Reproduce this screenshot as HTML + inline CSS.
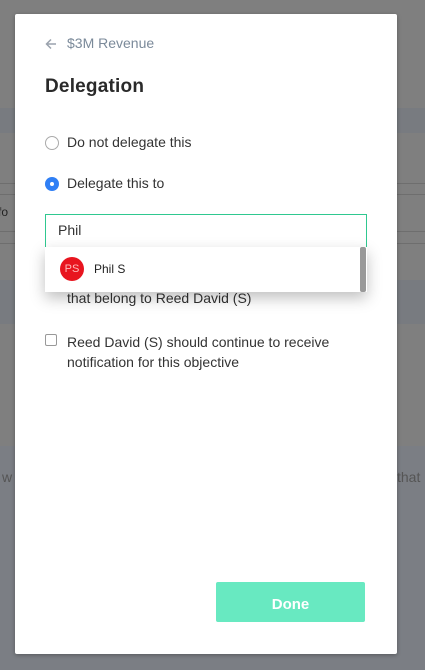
<!DOCTYPE html>
<html><head><style>
*{margin:0;padding:0;box-sizing:border-box}
body{width:425px;height:670px;overflow:hidden;background:#7f7f7f;font-family:"Liberation Sans",sans-serif;position:relative}
.bg{position:absolute;left:0;right:0}
.m{position:absolute;left:15px;top:14px;width:382px;height:640px;background:#fff;border-radius:2px;box-shadow:0 1px 4px rgba(0,0,0,.3)}
.t{position:absolute;font-size:14px;color:#333;white-space:nowrap}
</style></head><body>
<div class="bg" style="top:108px;height:25px;background:#787b80"></div>
<div class="bg" style="top:183px;height:1px;background:#6e6e6e"></div>
<div class="bg" style="top:194px;height:1px;background:#6e6e6e"></div>
<div class="bg" style="top:231px;height:1px;background:#6e6e6e"></div>
<div class="bg" style="top:243px;height:1px;background:#6e6e6e"></div>
<div class="bg" style="top:280px;height:44px;background:#787b80"></div>
<div class="bg" style="top:446px;bottom:0;background:#7b7e84"></div>
<div class="t" style="left:-2px;top:205px;font-size:12px;color:#222">fo</div>
<div class="t" style="left:2px;top:469px;color:#555">w</div>
<div class="t" style="left:397px;top:469px;color:#555">that</div>
<div class="m">
 <svg style="position:absolute;left:30px;top:24px" width="12" height="12" viewBox="0 0 12 12"><path d="M11 6H2M6 1.5L1.5 6 6 10.5" stroke="#9aa2ad" stroke-width="1.5" fill="none"/></svg>
 <div class="t" style="left:52px;top:21px;color:#7b8a9a;font-size:14px">$3M Revenue</div>
 <div class="t" style="left:30px;top:62px;font-size:19px;color:#2a2a2a;font-weight:bold;letter-spacing:.2px">Delegation</div>
 <div style="position:absolute;left:30px;top:122px;width:14px;height:14px;border:1px solid #aaa;border-radius:50%"></div>
 <div class="t" style="left:52px;top:120px">Do not delegate this</div>
 <div style="position:absolute;left:30px;top:163px;width:14px;height:14px;background:#2f7ff5;border-radius:50%"><div style="position:absolute;left:5px;top:5px;width:4px;height:4px;background:#fff;border-radius:50%"></div></div>
 <div class="t" style="left:52px;top:161px">Delegate this to</div>
 <div style="position:absolute;left:30px;top:200px;width:322px;height:34px;border:1px solid #2fc890"></div>
 <div class="t" style="left:43px;top:208px">Phil</div>
 <div class="t" style="left:52px;top:276px">that belong to Reed David (S)</div>
 <div style="position:absolute;left:30px;top:233px;width:322px;height:45px;background:#fff;box-shadow:0 6px 14px rgba(0,0,0,.25)">
  <div style="position:absolute;left:15px;top:10px;width:24px;height:24px;border-radius:50%;background:#e8151f;color:#fbb;font-size:11px;text-align:center;line-height:24px">PS</div>
  <div class="t" style="left:49px;top:15px;font-size:12px;color:#222">Phil S</div>
  <div style="position:absolute;right:1px;top:0;width:6px;height:45px;background:#999;border-radius:2px"></div>
 </div>
 <div style="position:absolute;left:30px;top:320px;width:12px;height:12px;border:1px solid #999;border-radius:2px"></div>
 <div class="t" style="left:52px;top:318px;line-height:20px">Reed David (S) should continue to receive<br>notification for this objective</div>
 <div style="position:absolute;left:201px;top:568px;width:149px;height:40px;background:#68e9c1;border-radius:2px;color:#fff;font-weight:bold;font-size:15px;text-align:center;line-height:46px">Done</div>
</div>
</body></html>
